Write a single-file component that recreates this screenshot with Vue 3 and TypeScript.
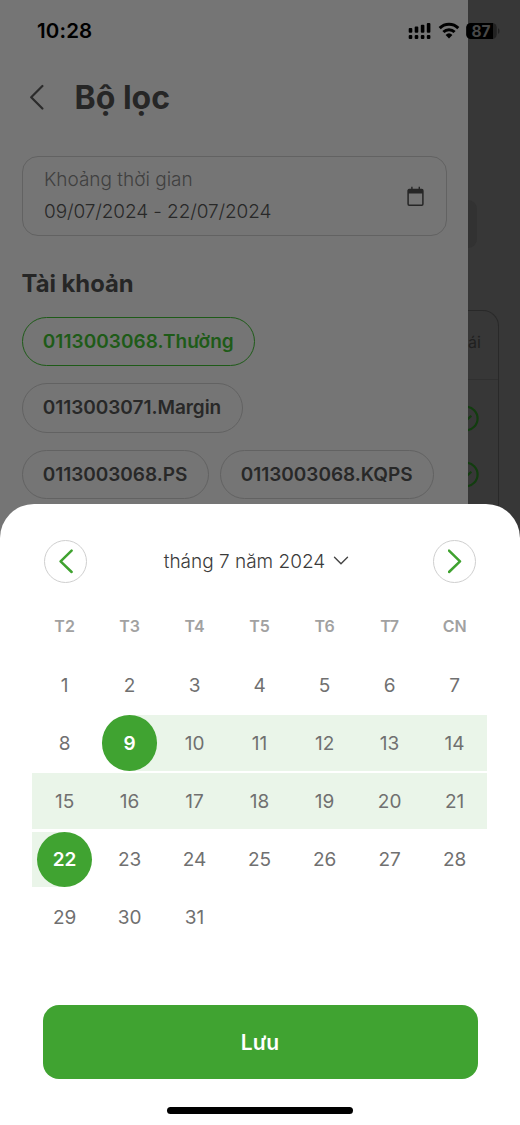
<script setup lang="ts">
interface Account {
  id: string
  active: boolean
}

const accountRows: Account[][] = [
  [{ id: '0113003068.Thường', active: true }],
  [{ id: '0113003071.Margin', active: false }],
  [
    { id: '0113003068.PS', active: false },
    { id: '0113003068.KQPS', active: false },
  ],
]

const weekdays: string[] = ['T2', 'T3', 'T4', 'T5', 'T6', 'T7', 'CN']
const days: number[] = Array.from({ length: 31 }, (_, i) => i + 1)
const rangeStart = 9
const rangeEnd = 22

function dayClasses(day: number): Record<string, boolean> {
  return {
    start: day === rangeStart,
    end: day === rangeEnd,
    within: day > rangeStart && day < rangeEnd,
  }
}
</script>

<template>
  <div class="screen">
    <main class="drawer">
      <header class="head">
        <svg class="back" width="16" height="26" viewBox="0 0 16 26">
          <path d="M13.4 2 L2.2 13.2 L13.4 24.5" />
        </svg>
        <h1>Bộ lọc</h1>
      </header>

      <div class="range-field">
        <div class="range-text">
          <span class="range-label">Khoảng thời gian</span>
          <span class="range-value">09/07/2024 - 22/07/2024</span>
        </div>
        <svg class="calendar" width="18" height="21" viewBox="0 0 18 21">
          <path d="M2.2 3.6h12.6a1.1 1.1 0 0 1 1.1 1.1v13.4a1.1 1.1 0 0 1-1.1 1.1H2.2a1.1 1.1 0 0 1-1.1-1.1V4.7A1.1 1.1 0 0 1 2.2 3.6Z" class="frame" />
          <path d="M1 3.4h15v4.2H1zM4.2 .8h1.4v3H4.2zM11.6 .8h1.4v3H11.6z" class="solid" />
        </svg>
      </div>

      <h2>Tài khoản</h2>
      <div class="accounts">
        <div v-for="(row, i) in accountRows" :key="i" class="account-row">
          <button v-for="account in row" :key="account.id" class="chip" :class="{ active: account.active }">
            {{ account.id }}
          </button>
        </div>
      </div>
    </main>

    <aside class="behind">
      <div class="tab"></div>
      <div class="table">
        <div class="table-head">ái</div>
        <svg v-for="n in 2" :key="n" class="tick" width="26" height="28" viewBox="0 0 26 28">
          <circle cx="12.8" cy="13.5" r="11.8" />
          <path d="M8 13l3.4 4 7-6.2" />
        </svg>
      </div>
    </aside>

    <div class="status">
      <span class="clock">10:28</span>
      <svg class="indicators" width="94" height="20" viewBox="0 0 94 20">
        <g>
          <rect x="0.7" y="6" width="3.6" height="4.8" rx="1" />
          <rect x="6.7" y="4.6" width="3.6" height="6.2" rx="1" />
          <rect x="12.8" y="2.8" width="3.6" height="8" rx="1" />
          <rect x="18.8" y="1" width="3.6" height="9.8" rx="1" />
          <rect x="0.7" y="13" width="3.6" height="4" rx="1.1" />
          <rect x="6.7" y="13" width="3.6" height="4" rx="1.1" />
          <rect x="12.8" y="13" width="3.6" height="4" rx="1.1" />
          <rect x="18.8" y="13" width="3.6" height="4" rx="1.1" />
        </g>
        <g class="wifi">
          <path d="M31.7 6.1a13.3 13.3 0 0 1 18.6 0" />
          <path d="M35.4 10a8 8 0 0 1 11.2 0" />
        </g>
        <path d="M37.6 12.9a5 5 0 0 1 6.8 0L41 16.5Z" />
        <rect class="cell-rest" x="58.3" y="1" width="30.4" height="16" rx="4.6" />
        <path d="M63 1h22v16H63a4.7 4.7 0 0 1-4.7-4.6V5.6A4.7 4.7 0 0 1 63 1Z" />
        <path class="cell-rest" d="M90 6.2c2 .8 2 4.8 0 5.6Z" />
        <text x="73.1" y="14.6" text-anchor="middle">87</text>
      </svg>
    </div>

    <section class="sheet">
      <div class="month-bar">
        <button class="step">
          <svg width="14" height="26" viewBox="0 0 14 26"><path d="M12.6 2.6 1.6 13.3l11 10.7" /></svg>
        </button>
        <div class="month">
          <span>tháng 7 năm 2024</span>
          <svg width="16" height="10" viewBox="0 0 16 10"><path d="M1.5 1.2 8 7.7l6.5-6.5" /></svg>
        </div>
        <button class="step">
          <svg width="14" height="26" viewBox="0 0 14 26"><path d="M1 2.6 12 13.3 1 24" /></svg>
        </button>
      </div>

      <div class="weekdays">
        <span v-for="name in weekdays" :key="name">{{ name }}</span>
      </div>
      <div class="days">
        <div v-for="day in days" :key="day" class="day" :class="dayClasses(day)">
          <span>{{ day }}</span>
        </div>
      </div>

      <button class="save">Lưu</button>
      <div class="home-bar"></div>
    </section>
  </div>
</template>

<style>
body {
  margin: 0;
}
</style>

<style scoped>
* {
  box-sizing: border-box;
}

.screen {
  position: relative;
  display: flex;
  width: 520px;
  height: 1125px;
  overflow: hidden;
  font-family: Inter, "Noto Sans", sans-serif;
  background: #373737;
}

button {
  font-family: inherit;
  background: none;
  padding: 0;
}

h1,
h2 {
  margin: 0;
  font-weight: 700;
  color: #262626;
}

path {
  fill: none;
}

.drawer {
  width: 468px;
  padding: 78px 21px 0 21.5px;
  background: #757575;
}

.head {
  display: flex;
  align-items: center;
  height: 40px;
  padding-left: 7.5px;
}

.back {
  margin-top: -1.5px;
}

.back path {
  stroke: #2b2b2b;
  stroke-width: 2.2;
  stroke-linecap: round;
  stroke-linejoin: round;
}

h1 {
  margin-left: 29.5px;
  font-size: 32px;
  line-height: 40px;
}

.range-field {
  display: flex;
  align-items: center;
  justify-content: space-between;
  height: 80px;
  margin-top: 38px;
  padding: 0 21.5px;
  border: 1px solid #626262;
  border-radius: 16px;
}

.range-text {
  display: flex;
  flex-direction: column;
  font-size: 19px;
  line-height: 32px;
  font-weight: 300;
}

.range-label {
  color: #404040;
}

.range-value {
  letter-spacing: -0.1px;
  color: #282828;
}

.calendar .frame {
  stroke: #262626;
  stroke-width: 1.5;
}

.calendar .solid {
  fill: #262626;
}

h2 {
  margin-top: 32px;
  font-size: 23.8px;
  line-height: 32px;
}

.accounts {
  display: flex;
  flex-direction: column;
  gap: 17px;
  margin-top: 16.5px;
}

.account-row {
  display: flex;
  gap: 11px;
}

.chip {
  height: 49.6px;
  padding: 0 20.3px;
  border: 1px solid #626262;
  border-radius: 25px;
  font-size: 19px;
  font-weight: 600;
  letter-spacing: -0.04px;
  color: #282828;
  white-space: nowrap;
}

.chip.active {
  border: 1.4px solid #1e5b18;
  letter-spacing: 0.04px;
  color: #1e5b18;
}

.behind {
  width: 52px;
  padding-top: 200px;
  background: #373737;
}

.tab {
  width: 9px;
  height: 48px;
  border-radius: 0 9px 9px 0;
  background: #323232;
}

.table {
  width: 30.5px;
  height: 240px;
  margin-top: 62px;
  border: 1px solid #292929;
  border-left: 0;
  border-radius: 0 16px 0 0;
  overflow: hidden;
}

.table-head {
  height: 69px;
  margin-bottom: 24.5px;
  border-bottom: 1px solid #303030;
  font-size: 16px;
  line-height: 62px;
  color: #202020;
}

.tick {
  display: block;
  margin: 0 0 28px -15px;
}

.tick circle,
.tick path {
  fill: none;
  stroke: #123d0f;
  stroke-width: 2.2;
}

.status {
  position: absolute;
  inset: 0 0 auto 0;
  display: flex;
  justify-content: space-between;
  padding: 18px 18px 0 37px;
}

.clock {
  font-size: 20.5px;
  line-height: 26px;
  font-weight: 600;
  letter-spacing: 0.15px;
  color: #000;
}

.indicators {
  margin-top: 4px;
}

.indicators path {
  fill: #000;
}

.indicators .wifi path {
  fill: none;
  stroke: #000;
  stroke-width: 3;
}

.indicators .cell-rest {
  fill: #222;
}

.indicators text {
  font-size: 15.5px;
  font-weight: 700;
  fill: #484848;
}

.sheet {
  position: absolute;
  inset: 503.7px 0 0 0;
  padding: 36px 32.5px 0;
  border-radius: 34px 34px 0 0;
  background: #fff;
}

.month-bar {
  display: flex;
  align-items: center;
  justify-content: space-between;
  padding: 0 11.5px;
}

.step {
  display: grid;
  place-items: center;
  width: 43px;
  height: 43px;
  border: 1px solid #cfcfcf;
  border-radius: 50%;
}

.step path {
  stroke: #3fa22f;
  stroke-width: 2.5;
  stroke-linecap: round;
  stroke-linejoin: round;
}

.month {
  display: flex;
  align-items: center;
  gap: 8px;
  margin-right: 7px;
  font-size: 19px;
  font-weight: 300;
  color: #3b3b3b;
}

.month path {
  stroke: #444;
  stroke-width: 1.4;
  stroke-linecap: round;
}

.weekdays,
.days {
  display: grid;
  grid-template-columns: repeat(7, 65px);
  margin-left: -0.4px;
  text-align: center;
}

.weekdays {
  margin-top: 31px;
  font-size: 16px;
  line-height: 24px;
  font-weight: 600;
  color: #a1a1a1;
}

.days {
  grid-auto-rows: 55.4px;
  row-gap: 2.8px;
  margin-top: 19.3px;
}

.day {
  display: grid;
  place-items: center;
  font-size: 19px;
  color: #707070;
}

.day span {
  display: grid;
  place-items: center;
  width: 55.4px;
  height: 55.4px;
  padding-top: 1px;
  border-radius: 50%;
}

.within {
  background: #eaf5e9;
}

.start {
  background: linear-gradient(to right, transparent 50%, #eaf5e9 50%);
}

.end {
  background: linear-gradient(to right, #eaf5e9 50%, transparent 50%);
}

.start span,
.end span {
  background: #40a331;
  color: #fff;
  font-weight: 600;
}

.save {
  display: block;
  width: 435px;
  height: 74.5px;
  margin: 59.7px auto 0;
  border: 0;
  border-radius: 16px;
  background: #40a331;
  color: #fff;
  font-size: 21px;
  font-weight: 600;
}

.home-bar {
  width: 186px;
  height: 7px;
  margin: 27.5px auto 0;
  border-radius: 4px;
  background: #000;
}
</style>
